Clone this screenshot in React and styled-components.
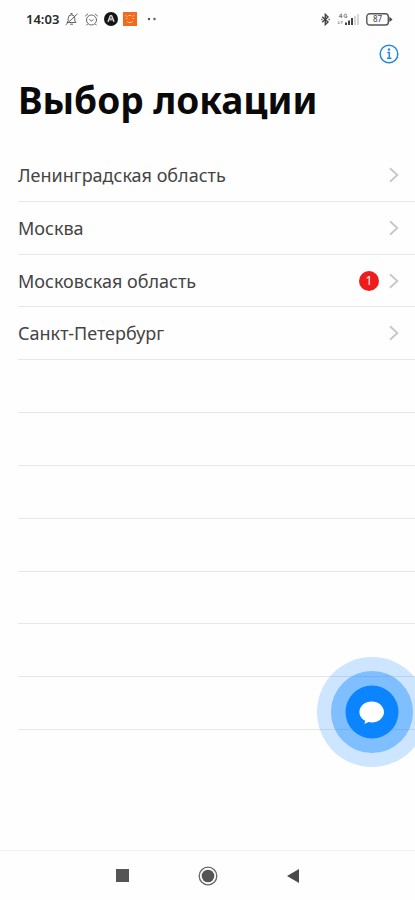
import React from "react";
import styled, { createGlobalStyle } from "styled-components";

const GlobalStyle = createGlobalStyle`
  *, *::before, *::after { box-sizing: border-box; }
  body {
    margin: 0;
    background: #fefefe;
    color: #444;
    font-family: "Noto Sans", "Open Sans", sans-serif;
    overflow-x: hidden;
  }
  button { font: inherit; color: inherit; background: none; border: 0; padding: 0; cursor: pointer; }
  svg { display: block; flex: none; }
`;

const Screen = styled.div`
  display: flex;
  flex-direction: column;
  min-height: 100vh;
`;

const StatusBar = styled.header`
  display: flex;
  align-items: center;
  justify-content: space-between;
  height: 38px;
  padding: 0 22px 0 26px;
`;

const StatusGroup = styled.div`
  display: flex;
  align-items: center;
  gap: ${({ $gap }) => $gap}px;
`;

const Clock = styled.time`
  color: #2a2a2a;
  font-size: 13px;
  font-weight: 600;
  line-height: 16px;
`;

const Toolbar = styled.div`
  display: flex;
  justify-content: flex-end;
  align-items: center;
  height: 32px;
  padding-right: 16px;
`;

const InfoButton = styled.button`
  display: grid;
  place-items: center;
`;

const Title = styled.h1`
  margin: 0;
  padding: 5px 18px 24px;
  color: #0a0a0a;
  font-size: 37px;
  font-weight: 700;
  line-height: 50px;
  white-space: nowrap;
`;

const Main = styled.main`
  flex: 1;
  display: flex;
  flex-direction: column;
  padding-bottom: 120px;
`;

const List = styled.ul`
  flex: 1;
  display: grid;
  grid-auto-rows: 1fr;
  margin: 0;
  padding: 0 0 0 18px;
  list-style: none;
`;

const Cell = styled.li`
  display: flex;
  min-height: 44px;
  border-bottom: 1px solid #e6e6e6;
`;

const LocationButton = styled.button`
  flex: 1;
  display: flex;
  align-items: center;
  gap: 10px;
  padding-right: 16px;
  text-align: left;
`;

const LocationName = styled.span`
  flex: 1;
  font-size: 18px;
  line-height: 24px;
`;

const Badge = styled.span`
  width: 20px;
  height: 20px;
  border-radius: 50%;
  background: #ee1c1a;
  color: #fff;
  font-size: 12px;
  line-height: 20px;
  text-align: center;
`;

const ChatButton = styled.button`
  position: fixed;
  right: -12px;
  bottom: 133px;
  width: 110px;
  height: 110px;
  border-radius: 50%;
`;

const NavBar = styled.nav`
  display: grid;
  grid-template-columns: repeat(3, 85px);
  justify-content: center;
  height: 50px;
  border-top: 1px solid #f0f0f0;
`;

const NavButton = styled.button`
  display: grid;
  place-items: center;
`;

const locations = [
  { name: "Ленинградская область" },
  { name: "Москва" },
  { name: "Московская область", count: 1 },
  { name: "Санкт-Петербург" },
];

const emptyRows = [5, 6, 7, 8, 9, 10, 11];

const MutedIcon = () => (
  <svg width="15" height="15" viewBox="0 0 15 15" fill="none" stroke="#666" strokeWidth="1">
    <path d="M3 10.5h9L10.8 9V6.2a3.3 3.3 0 0 0-6.6 0V9z" />
    <path d="M6 12.2h3M1.5 13 13.5 1.8M6.8 2.5V1.5h1.4v1" />
  </svg>
);

const AlarmIcon = () => (
  <svg width="15" height="15" viewBox="0 0 15 15" fill="none" stroke="#666" strokeWidth="1">
    <circle cx="7.5" cy="8" r="5" />
    <path d="M5.3 7.5l2.2 1.5 2-1.5M1.2 4.2 4 1.8M13.8 4.2 11 1.8M3.6 12l-1 1.3M11.4 12l1 1.3" />
  </svg>
);

const AppIcon = () => (
  <svg width="14" height="14" viewBox="0 0 14 14">
    <circle cx="7" cy="7" r="7" fill="#151515" />
    <path d="M3.8 9.8C5.4 8.4 5.4 3.6 7 3.6s1.6 4.8 3.2 6.2M7 6.2v2.4" fill="none" stroke="#ddd" strokeWidth="1.5" />
  </svg>
);

const OrangeIcon = () => (
  <svg width="14" height="14" viewBox="0 0 14 14">
    <path d="M0 0h14v14H0z" fill="#f26a1b" />
    <path d="M2.5 3.5l2 1M11.5 3l-2 1.5M5.5 3.5h3M3 6.5h1.5M9.5 6.5H11M4 9.5c1.8 1.5 4.2 1.5 6 0" fill="none" stroke="#fbc79f" />
  </svg>
);

const DotsIcon = () => (
  <svg width="10" height="4" viewBox="0 0 10 4" fill="#555">
    <circle cx="2" cy="2" r="1.2" />
    <circle cx="7.5" cy="2" r="1.2" />
  </svg>
);

const BluetoothIcon = () => (
  <svg width="9" height="13" viewBox="0 0 9 13" fill="none" stroke="#444" strokeWidth="1.4">
    <path d="M1.2 3.8 7 9 4.3 11.6V1.4L7 4 1.2 9.2" />
    <path d="M.3 6.5h1.2M7.5 6.5h1.2" />
  </svg>
);

const SignalIcon = () => (
  <svg width="22" height="13" viewBox="0 0 22 13">
    <path d="M4.4 5V.8L2 3.6h3.4M9.8 1.6C8.4.5 7 1.2 7 2.9s1.5 2.2 2.9 1.4V3H8.5" fill="none" stroke="#777" strokeWidth=".9" />
    <path d="M1.8 8v3M.7 9.8 1.8 11l1-1.2M4.8 11V8M3.8 9.2 4.8 8l1 1.2" fill="none" stroke="#999" strokeWidth=".8" />
    <path d="M8 9.5h2V12H8zM11 7.5h2V12h-2zM14 5h2v7h-2z" fill="#444" />
    <path d="M17 3h2v9h-2zM20 1h2v11h-2z" fill="#d6d6d6" />
  </svg>
);

const BatteryIcon = () => (
  <svg width="27" height="13" viewBox="0 0 27 13">
    <rect x=".8" y=".8" width="21.5" height="11.2" rx="2.8" fill="none" stroke="#555" strokeWidth="1.4" />
    <path d="M23.3 3.5 26.5 6.4l-3.2 2.9z" fill="#444" />
    <text x="11.5" y="9.4" textAnchor="middle" fontSize="8" fontWeight="500" fill="#555">87</text>
  </svg>
);

const InfoIcon = () => (
  <svg width="20" height="20" viewBox="0 0 20 20" fill="none" stroke="#2389dc">
    <circle cx="10" cy="10" r="8.8" strokeWidth="1.5" />
    <path d="M8.3 8.5h2V14M8 14.2h4.400" strokeWidth="1.5" />
    <circle cx="10" cy="5.5" r="1.2" fill="#2389dc" stroke="none" />
  </svg>
);

const ChevronIcon = () => (
  <svg width="10" height="16" viewBox="0 0 10 16" fill="none" stroke="#c8c8c8" strokeWidth="1.9">
    <path d="M1 1.3 8.3 8 1 14.7" />
  </svg>
);

const ChatIcon = () => (
  <svg width="110" height="110" viewBox="0 0 110 110">
    <circle cx="55" cy="55" r="55" fill="#0a84ff" fillOpacity=".2" />
    <circle cx="55" cy="55" r="41" fill="#0a84ff" fillOpacity=".4" />
    <circle cx="55" cy="55" r="26.5" fill="#0a84ff" />
    <path d="M54.7 44.5c6.8 0 12.3 4.7 12.3 10.5s-5.5 10.5-12.3 10.5c-1.2 0-2.2-.1-3.3-.4-1 .9-2.5 1.5-4.6 1.5 1.1-.9 1.5-1.7 1.4-2.8-3.5-1.8-5.8-5.1-5.8-8.8 0-5.8 5.500-10.5 12.3-10.5z" fill="#fff" />
  </svg>
);

const SquareIcon = () => (
  <svg width="13" height="13" viewBox="0 0 13 13"><path d="M0 0h13v13H0z" fill="#555" /></svg>
);

const HomeIcon = () => (
  <svg width="20" height="20" viewBox="0 0 20 20">
    <circle cx="10" cy="10" r="8.8" fill="none" stroke="#666" strokeWidth="1.3" />
    <circle cx="10" cy="10" r="6.3" fill="#555" />
  </svg>
);

const BackIcon = () => (
  <svg width="12" height="14" viewBox="0 0 12 14"><path d="M12 0v14L0 7z" fill="#4a4a4a" /></svg>
);

export default function App() {
  return (
    <Screen>
      <GlobalStyle />
      <StatusBar>
        <StatusGroup $gap={10}>
          <StatusGroup $gap={5}>
            <Clock>14:03</Clock>
            <MutedIcon />
            <AlarmIcon />
            <AppIcon />
            <OrangeIcon />
          </StatusGroup>
          <DotsIcon />
        </StatusGroup>
        <StatusGroup $gap={7}>
          <BluetoothIcon />
          <SignalIcon />
          <BatteryIcon />
        </StatusGroup>
      </StatusBar>
      <Toolbar>
        <InfoButton type="button" aria-label="Информация"><InfoIcon /></InfoButton>
      </Toolbar>
      <Title>Выбор локации</Title>
      <Main>
        <List>
          {locations.map(({ name, count }) => (
            <Cell key={name}>
              <LocationButton type="button">
                <LocationName>{name}</LocationName>
                {count && <Badge>{count}</Badge>}
                <ChevronIcon />
              </LocationButton>
            </Cell>
          ))}
          {emptyRows.map((row) => <Cell key={row} aria-hidden="true" />)}
        </List>
      </Main>
      <ChatButton type="button" aria-label="Чат"><ChatIcon /></ChatButton>
      <NavBar>
        <NavButton type="button" aria-label="Недавние"><SquareIcon /></NavButton>
        <NavButton type="button" aria-label="Домой"><HomeIcon /></NavButton>
        <NavButton type="button" aria-label="Назад"><BackIcon /></NavButton>
      </NavBar>
    </Screen>
  );
}
